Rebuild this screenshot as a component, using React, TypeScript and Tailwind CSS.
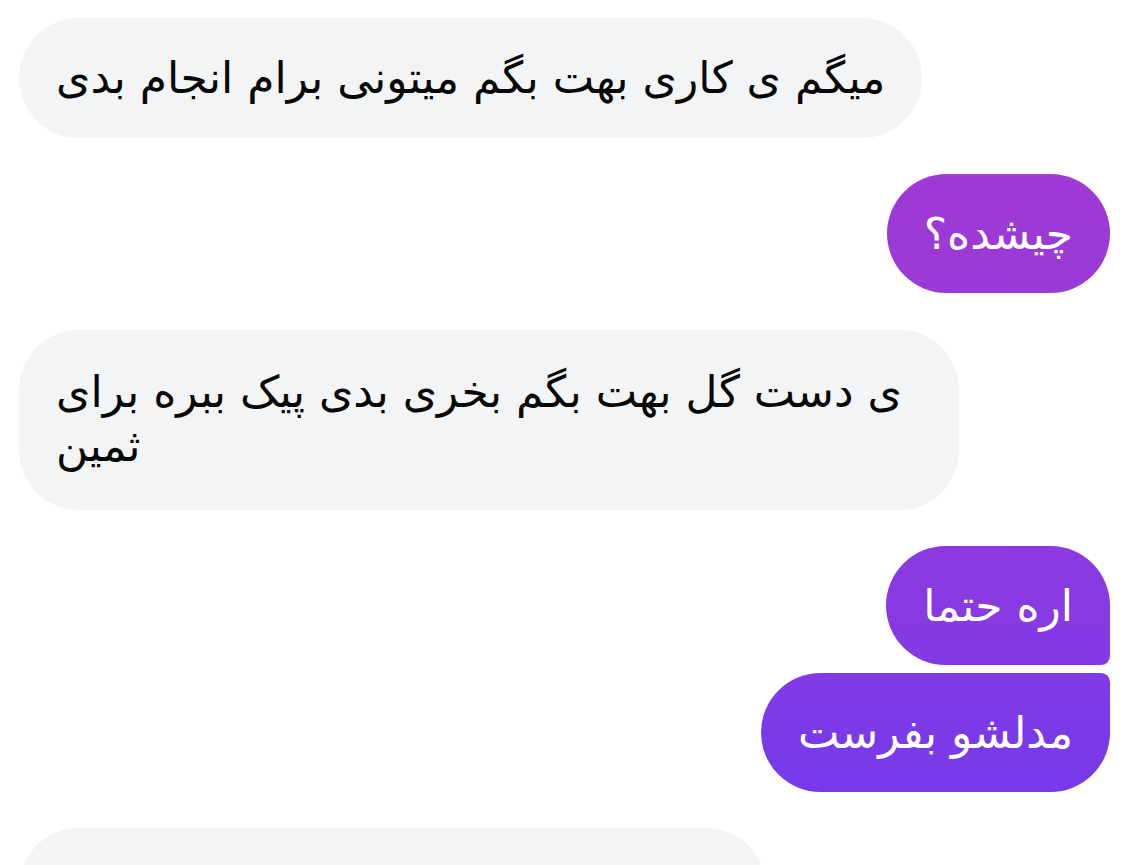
const sentBg =
  "bg-[linear-gradient(to_bottom,#a53ad0_0px,#9c3ad6_233px,#8939e2_605px,#7b3ae8_732px,#7239ec_865px)] bg-fixed text-white";

function Received({ children, className = "" }: { children?: React.ReactNode; className?: string }) {
  return (
    <div
      className={`self-start rounded-[60px] bg-[#f3f4f6] px-[37px] text-left text-[44px] text-[#080808] ${className}`}
    >
      {children}
    </div>
  );
}

function Sent({ children, className = "" }: { children: React.ReactNode; className?: string }) {
  return (
    <div className={`self-end px-[37px] py-[31.5px] text-left text-[44px] leading-[56px] ${sentBg} ${className}`}>
      {children}
    </div>
  );
}

export default function App() {
  return (
    <main
      className="h-[865px] overflow-hidden bg-white"
      style={{ fontFamily: '"DejaVu Sans", sans-serif' }}
    >
      <div className="flex flex-col pl-[19px] pr-[23px] pt-[18px]">
        <Received className="max-w-[940px] py-[32px] leading-[56px]">
          میگم ی کاری بهت بگم میتونی برام انجام بدی
        </Received>

        <Sent className="mt-[36px] rounded-[60px]">چیشده؟</Sent>

        <Received className="mt-[37px] max-w-[940px] pb-[37px] pt-[35px] leading-[54px]">
          ی دست گل بهت بگم بخری بدی پیک ببره برای ثمین
        </Received>

        <Sent className="mt-[36px] rounded-[60px] rounded-br-[9px]">اره حتما</Sent>
        <Sent className="mt-[8px] rounded-[60px] rounded-tr-[9px]">مدلشو بفرست</Sent>

        <Received className="mt-[36px] h-[120px] w-[747px]" />
      </div>
    </main>
  );
}
